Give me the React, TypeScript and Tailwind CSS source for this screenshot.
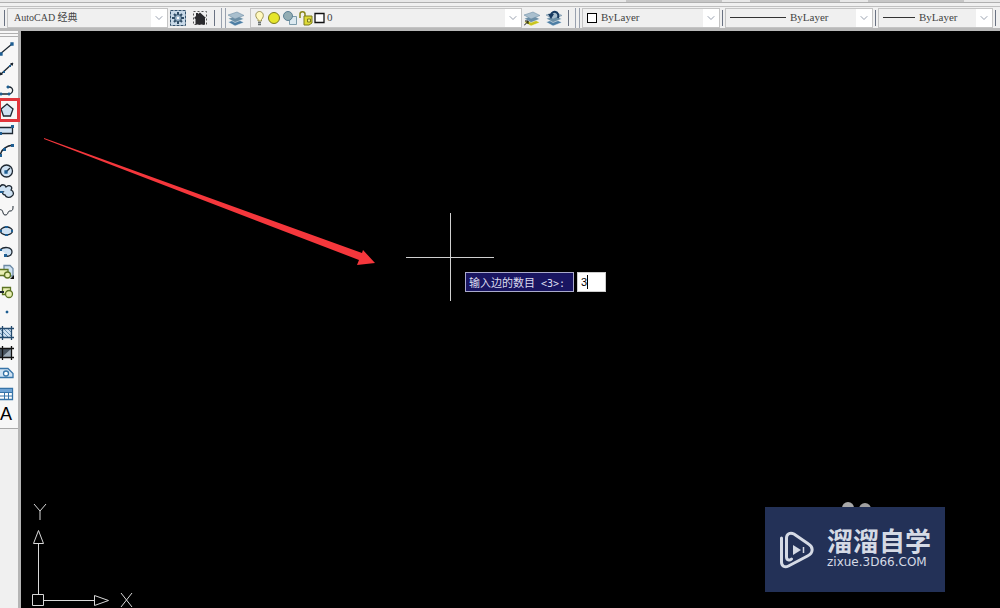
import type { ReactNode } from 'react';
import { ChevronDown } from 'lucide-react';
import clsx from 'clsx';

const ink = '#1d2731';
const blue = '#1f5f93';
const fill = '#cfe2f3';

type Tool = { name: string; art: ReactNode };

// every drawing tool is drawn on a 16x20 box
const tools: Tool[] = [
  {
    name: 'Line',
    art: (
      <>
        <path d="M0 15 12 5" stroke={ink} />
        <path d="M0 14h2v2H0zM11 4h2v2h-2z" fill={blue} stroke={blue} />
      </>
    ),
  },
  {
    name: 'Construction line',
    art: (
      <>
        <path d="M0 16 13 4" stroke={ink} />
        <path d="M3 12h2v2H3zM9 6h2v2H9z" fill={blue} stroke="none" />
        <path d="M10 4h3v3zM0 13v3h3z" fill={ink} stroke="none" />
      </>
    ),
  },
  {
    name: 'Polyline',
    art: (
      <>
        <path d="M0 14h8c6 0 6-7 1-7" stroke={ink} />
        <path d="M0 13h2v2H0zM8 13h2v2H8zM7 6h2v2H7z" fill={blue} stroke={blue} strokeWidth="0.8" />
      </>
    ),
  },
  { name: 'Polygon', art: <path d="M7 4l6 5-2.500 7h-7L1 9z" fill={fill} stroke={ink} /> },
  {
    name: 'Rectangle',
    art: (
      <>
        <path d="M-2 7.500H12.500v6H-2z" fill={fill} stroke={ink} />
        <path d="M11 5h3v3h-3zM0 12h2v3H0z" fill={blue} stroke="none" />
      </>
    ),
  },
  {
    name: 'Arc',
    art: (
      <>
        <path d="M0 16C1 10 5 6 13 5" stroke={ink} />
        <path d="M0 14h2v3H0zM3 8h3v3H3zM11 4h3v3h-3z" fill={blue} stroke="none" />
      </>
    ),
  },
  {
    name: 'Circle',
    art: (
      <>
        <circle cx="6.500" cy="10" r="6" fill={fill} stroke={ink} />
        <path d="M6 11l4-4" stroke={ink} />
        <path d="M5 10h2v2H5z" fill={blue} stroke={blue} />
      </>
    ),
  },
  {
    name: 'Revision cloud',
    art: (
      <>
        <path d="M0 6c1-3 5-3 6 0 4-3 7 0 5 3 3 1 3 5 1 6-2 2-6 2-7-1-2 0-3-2-2-3H0" fill={fill} stroke={ink} />
        <path d="M0 10h3v2H0z" fill={blue} stroke="none" />
      </>
    ),
  },
  { name: 'Spline', art: <path d="M-1 9c5-2 3 5 6 5 4 0 2-4 5-4 3 0 3-2 3-5" stroke={ink} strokeWidth="1" /> },
  {
    name: 'Ellipse',
    art: (
      <>
        <ellipse cx="6.500" cy="10" rx="6" ry="4" fill={fill} stroke={ink} />
        <path d="M0 9h2v2H0zM11 9h2v2h-2zM5 5h3v2H5zM5 13h3v2H5z" fill={blue} stroke="none" />
      </>
    ),
  },
  {
    name: 'Ellipse arc',
    art: (
      <>
        <path d="M0 8c4-4 12-3 12 2 0 4-4 5-7 4v-3z" fill={fill} stroke="none" />
        <path d="M0 8c4-4 12-3 12 2 0 3-3 5-7 4" stroke={ink} />
        <path d="M4 12h3v3H4zM0 7h2v2H0z" fill={blue} stroke="none" />
      </>
    ),
  },
  {
    name: 'Insert block',
    art: (
      <>
        <path d="M4 3.500h6l3 3V14H4z" fill={fill} stroke="#6d8aa5" />
        <path d="M-1 7.500h9v6H-1z" fill="#e9efb5" stroke="#5c7423" />
        <circle cx="7.500" cy="13" r="3" fill="#e9efb5" stroke="#5c7423" />
        <path d="M14 13v4h-4z" fill="#111" stroke="none" />
      </>
    ),
  },
  {
    name: 'Make block',
    art: (
      <>
        <path d="M2.500 5.500h8v7h-8z" fill="#e9efb5" stroke="#5c7423" />
        <circle cx="9" cy="12" r="3.500" fill="#e9efb5" stroke="#5c7423" />
        <path d="M0 10h4" stroke={ink} strokeWidth="2" />
      </>
    ),
  },
  { name: 'Point', art: <path d="M6 9h2v2H6z" fill={blue} stroke={blue} strokeWidth="0.5" /> },
  {
    name: 'Hatch',
    art: (
      <>
        <path d="M0 5h11v10H0z" fill={fill} stroke="none" />
        <path d="M0 6l9 9M0 10l5 5M3 5l8 8M7 5l4 4" stroke="#4f7ca3" strokeWidth="0.8" />
        <path d="M-1 5.500h15M-1 14.500h15M2.500 3v14M11.500 3v14" stroke="#234a6d" />
      </>
    ),
  },
  {
    name: 'Gradient',
    art: (
      <>
        <path d="M0 5h11v10H0z" fill="#46525e" stroke="none" />
        <path d="M2 14L11 6v8z" fill="#9aa8b5" stroke="none" />
        <path d="M-1 5.500h15M-1 14.500h15M2.500 3v14M11.500 3v14" stroke="#111" />
      </>
    ),
  },
  {
    name: 'Region',
    art: (
      <>
        <path d="M-1 5.500h9l5 5v4H-1z" fill={fill} stroke="#3774a8" />
        <circle cx="6" cy="10.500" r="2.500" fill="#fff" stroke="#3774a8" />
      </>
    ),
  },
  {
    name: 'Table',
    art: (
      <>
        <path d="M-1 4.500h13.500v11H-1z" fill="#fff" stroke="#3774a8" />
        <path d="M0 5h12v3H0z" fill="#6ea3d4" stroke="none" />
        <path d="M0 8.500h12M0 12h12M4.500 8v7M8.500 8v7" stroke="#3774a8" strokeWidth="1" />
      </>
    ),
  },
];

function Layers({ bottom = '#4d7ea4' }: { bottom?: string }) {
  return (
    <>
      <path d="M0 12l9-3 7 3.500-9 3.500z" fill={bottom} stroke="#fff" strokeWidth="0.5" />
      <path d="M0 8.500L9 5.500 16 9l-9 3.500z" fill="#6c8fa6" stroke="#fff" strokeWidth="0.5" />
      <path d="M0 5L9 2l7 3.500L7 9z" fill="#a9bfce" stroke="#62859e" strokeWidth="0.5" />
    </>
  );
}

function IconButton({ label, children }: { label: string; children: ReactNode }) {
  return (
    <button type="button" aria-label={label} className="flex size-5 shrink-0 items-center justify-start">
      <svg viewBox="0 0 16 16" className="size-4" fill="none">
        {children}
      </svg>
    </button>
  );
}

function Divider() {
  return <span className="h-4 w-px shrink-0 bg-gray-500" />;
}

function Grip() {
  return (
    <span className="flex shrink-0 gap-[3px]">
      <span className="h-5 w-px bg-gray-400" />
      <span className="h-5 w-px bg-gray-400" />
    </span>
  );
}

type ComboProps = {
  label: string;
  value: string;
  className: string;
  selectClass: string;
  children?: ReactNode;
};

function Combo({ label, value, className, selectClass, children }: ComboProps) {
  return (
    <div className={clsx('relative flex h-5 items-center border border-[#c4c4c4] bg-[#f0f0f0]', className)}>
      <select
        aria-label={label}
        className={clsx(
          "h-full w-full appearance-none bg-transparent font-['Liberation_Serif','Noto_Sans_CJK_SC',serif] text-[#444] outline-none",
          selectClass,
        )}
      >
        <option>{value}</option>
      </select>
      <div className="pointer-events-none absolute inset-y-0 left-1 flex items-center gap-1">{children}</div>
      <span className="pointer-events-none absolute inset-y-0 right-0 flex w-4 items-center justify-center bg-white">
        <ChevronDown className="size-3 text-gray-400" strokeWidth={2} />
      </span>
    </div>
  );
}

function TopBar() {
  return (
    <header className="flex h-[31px] shrink-0 flex-col border-b-3 border-[#b9b9b9] bg-[#f0f0f0]">
      <div className="flex h-[3px] justify-end gap-7 border-b border-[#b0b0b0] bg-[#e8e8e8] pr-9">
        <span className="w-24 bg-[#c6c6c6]" />
        <span className="w-[90px] bg-[#c6c6c6]" />
        <span className="w-24 bg-[#c6c6c6]" />
      </div>
      <div className="mt-[3px] flex min-h-0 flex-1 items-center gap-0.5 border-t border-[#c0c0c0] px-1">
        <Divider />
        <Combo label="Workspace" value="AutoCAD 经典" className="w-[161px] shrink-0" selectClass="pl-1.5 text-[10px]" />
        <IconButton label="Workspace settings">
          <path d="M.5.5h15v15H.5z" fill="#c8d9e8" stroke="#34536e" strokeDasharray="3 1" />
          <path d="M8 2v12M2 8h12M4 4l8 8M12 4l-8 8" stroke="#2f4c65" strokeWidth="2" />
          <circle cx="8" cy="8" r="3.500" fill="#9cb6cc" stroke="#2f4c65" />
          <circle cx="8" cy="8" r="1.200" fill="#fff" />
        </IconButton>
        <IconButton label="My workspace">
          <path d="M1.500 1.500h13v13h-13z" stroke="#555" strokeDasharray="2 2" />
          <path d="M8 2.500l6 5.500h-1v6.500H3.500V9L2 8l2-2V3h2v1z" fill="#2b2b2e" />
        </IconButton>
        <Divider />
        <span className="w-0.5" />
        <Grip />
        <IconButton label="Layer properties">
          <Layers />
        </IconButton>
        <Combo label="Layer" value="0" className="min-w-0 flex-1" selectClass="pl-[76px] text-[11px]">
          <svg viewBox="0 0 72 16" className="h-4 w-[72px]" fill="none">
            <path d="M3 9.500C-1 6 1 1.500 4.500 1.500S10 6 6.500 9.500V11H3z" fill="#fff8bd" stroke="#9b9255" />
            <path d="M3 12.500h3M3 14.500h3" stroke="#69716f" strokeWidth="1.500" />
            <circle cx="19" cy="8" r="5.500" fill="#e6e62b" stroke="#7c7b1e" />
            <path d="M34.500 6.500h7v8h-7z" fill="#dce9f0" stroke="#7d9cab" />
            <circle cx="33" cy="6" r="4.500" fill="#93adb4" stroke="#5c8196" />
            <path d="M45 8V4c0-3 5-3 5 0v4" stroke="#88851c" strokeWidth="1.500" />
            <path d="M49 6h8v7l-3 2h-5V8z" fill="#dedb37" stroke="#7c7b1e" />
            <path d="M52.500 9h3v3h-3z" fill="#f5f28a" stroke="#7c7b1e" />
            <path d="M60 3.500h9v9h-9z" fill="#fff" stroke="#111" strokeWidth="1.300" />
          </svg>
        </Combo>
        <IconButton label="Make current">
          <Layers bottom="#c9c51e" />
          <path d="M0 15.500l4-4M1 11h3v3" stroke="#111" />
        </IconButton>
        <IconButton label="Layer previous">
          <Layers />
          <path d="M12 8c2-7-6-8-7-3" stroke="#183a60" strokeWidth="2" />
          <path d="M2 4h6L5 9z" fill="#183a60" />
        </IconButton>
        <Divider />
        <span className="w-0.5" />
        <Grip />
        <Combo label="Color" value="ByLayer" className="w-[138px] shrink-0" selectClass="pl-[18px] text-[11px]">
          <span className="size-2.5 border border-black bg-white" />
        </Combo>
        <Divider />
        <Combo label="Linetype" value="ByLayer" className="w-[148px] shrink-0" selectClass="pl-16 text-[11px]">
          <span className="h-px w-14 bg-[#333]" />
        </Combo>
        <Divider />
        <Combo label="Lineweight" value="ByLayer" className="w-[115px] shrink-0" selectClass="pl-10 text-[11px]">
          <span className="h-px w-8 bg-[#333]" />
        </Combo>
        <Divider />
      </div>
    </header>
  );
}

function ToolBar() {
  return (
    <aside className="w-[21px] shrink-0 border-r-3 border-[#b5b5b5] bg-[#f0f0f0]">
      <div className="flex h-[398px] flex-col border-b border-[#aaa] bg-[#f7f7f7]">
        <span className="mt-0.5 h-1 shrink-0 border-y border-[#b0b0b0]" />
        <div className="mt-0.5 flex h-[385px] flex-col justify-between">
          {tools.map((tool) => (
            <button key={tool.name} type="button" aria-label={tool.name} className="relative h-5 w-full">
              <svg viewBox="0 0 16 20" className="h-5 w-4" fill="none" strokeWidth="1.300">
                {tool.art}
              </svg>
              {tool.name === 'Polygon' && (
                <span className="absolute -inset-x-0.5 -inset-y-0.5 border-3 border-[#e0353b]" />
              )}
            </button>
          ))}
          <button
            type="button"
            aria-label="Multiline text"
            className="h-5 w-full text-left font-['Liberation_Sans',sans-serif] text-lg leading-5 text-black"
          >
            A
          </button>
        </div>
      </div>
    </aside>
  );
}

function Watermark() {
  return (
    <div className="absolute right-[55px] bottom-4">
      <span className="absolute -top-[5px] left-[77px] size-3 rounded-full bg-[#a9a9a9]" />
      <span className="absolute -top-1 left-[94px] size-3 rounded-full bg-[#a0a0a0]" />
      <div className="relative flex h-[85px] w-[180px] items-center gap-3 bg-[#233157] pl-3.5 text-[#d5dae5]">
        <svg viewBox="0 0 36 38" className="h-[38px] w-9 shrink-0" fill="none" stroke="currentColor" strokeLinecap="round">
          <path d="M2.500 7v24c0 4 3 6 7 4l19-10c6-3 6-9 1-12L15 3C11 1 7.500 3 7.500 7v19c0 3 3 4 5 2" strokeWidth="3" />
          <path d="M14 14l8 5-8 5z" fill="currentColor" stroke="none" />
          <path d="M24.500 16v6" strokeWidth="1.500" strokeLinecap="butt" />
        </svg>
        <div className="flex flex-col pb-1">
          <span className="font-['Liberation_Sans','Noto_Sans_CJK_SC',sans-serif] text-[26px] leading-7 font-bold whitespace-nowrap">
            溜溜自学
          </span>
          <span className="font-['DejaVu_Sans',sans-serif] text-xs leading-3">zixue.3D66.COM</span>
        </div>
      </div>
    </div>
  );
}

function Canvas() {
  return (
    <main className="relative min-w-0 flex-1 overflow-hidden bg-black">
      <svg viewBox="0 0 334 130" className="absolute top-[106px] left-[22px] h-[130px] w-[334px]">
        <path d="M1 1l318 115 1-3 12 13-18 2 2-5L1 2z" fill="#f5373c" />
      </svg>

      <svg viewBox="0 0 88 88" className="absolute top-[182px] left-[385px] size-[88px]">
        <path d="M44.500 0v88M0 44.500h88" stroke="#d0d0d0" />
      </svg>

      <div className="absolute top-[241px] left-[444px] flex h-5 gap-[3px]">
        <label
          htmlFor="sides"
          className="w-[109px] border border-[#aaaacc] bg-[#191561] px-[3px] font-['Noto_Sans_CJK_SC',sans-serif] text-[11px] leading-[18px] whitespace-nowrap text-[#dcdcf0]"
        >
          输入边的数目<span className="font-['DejaVu_Sans_Mono',monospace] text-[10px]"> &lt;3&gt;:</span>
        </label>
        <div className="flex w-[29px] items-center border border-[#ccc] bg-white pl-[3px]">
          <input
            id="sides"
            type="text"
            defaultValue="3"
            className="h-full w-1.5 bg-white font-['Liberation_Sans',sans-serif] text-[11px] text-black outline-none"
          />
          <span className="h-3.5 w-px bg-black" />
        </div>
      </div>

      <svg viewBox="0 0 106 108" className="absolute bottom-0 left-2 h-[108px] w-[106px]" fill="none" stroke="#d8d8d8">
        <path d="M3.500 94.500h11v11h-11zM9.500 94V44M15 100.500h50" />
        <path d="M9.500 30.500l-5 13h10zM65.500 95.500v10l14-5z" />
        <path d="M5 4l6 7 6-7M11 11v9M92 93l11 14M103 93L92 107" />
      </svg>

      <Watermark />
    </main>
  );
}

export default function App() {
  return (
    <div className="flex h-screen flex-col overflow-hidden bg-black">
      <TopBar />
      <div className="flex min-h-0 flex-1">
        <ToolBar />
        <Canvas />
      </div>
    </div>
  );
}
